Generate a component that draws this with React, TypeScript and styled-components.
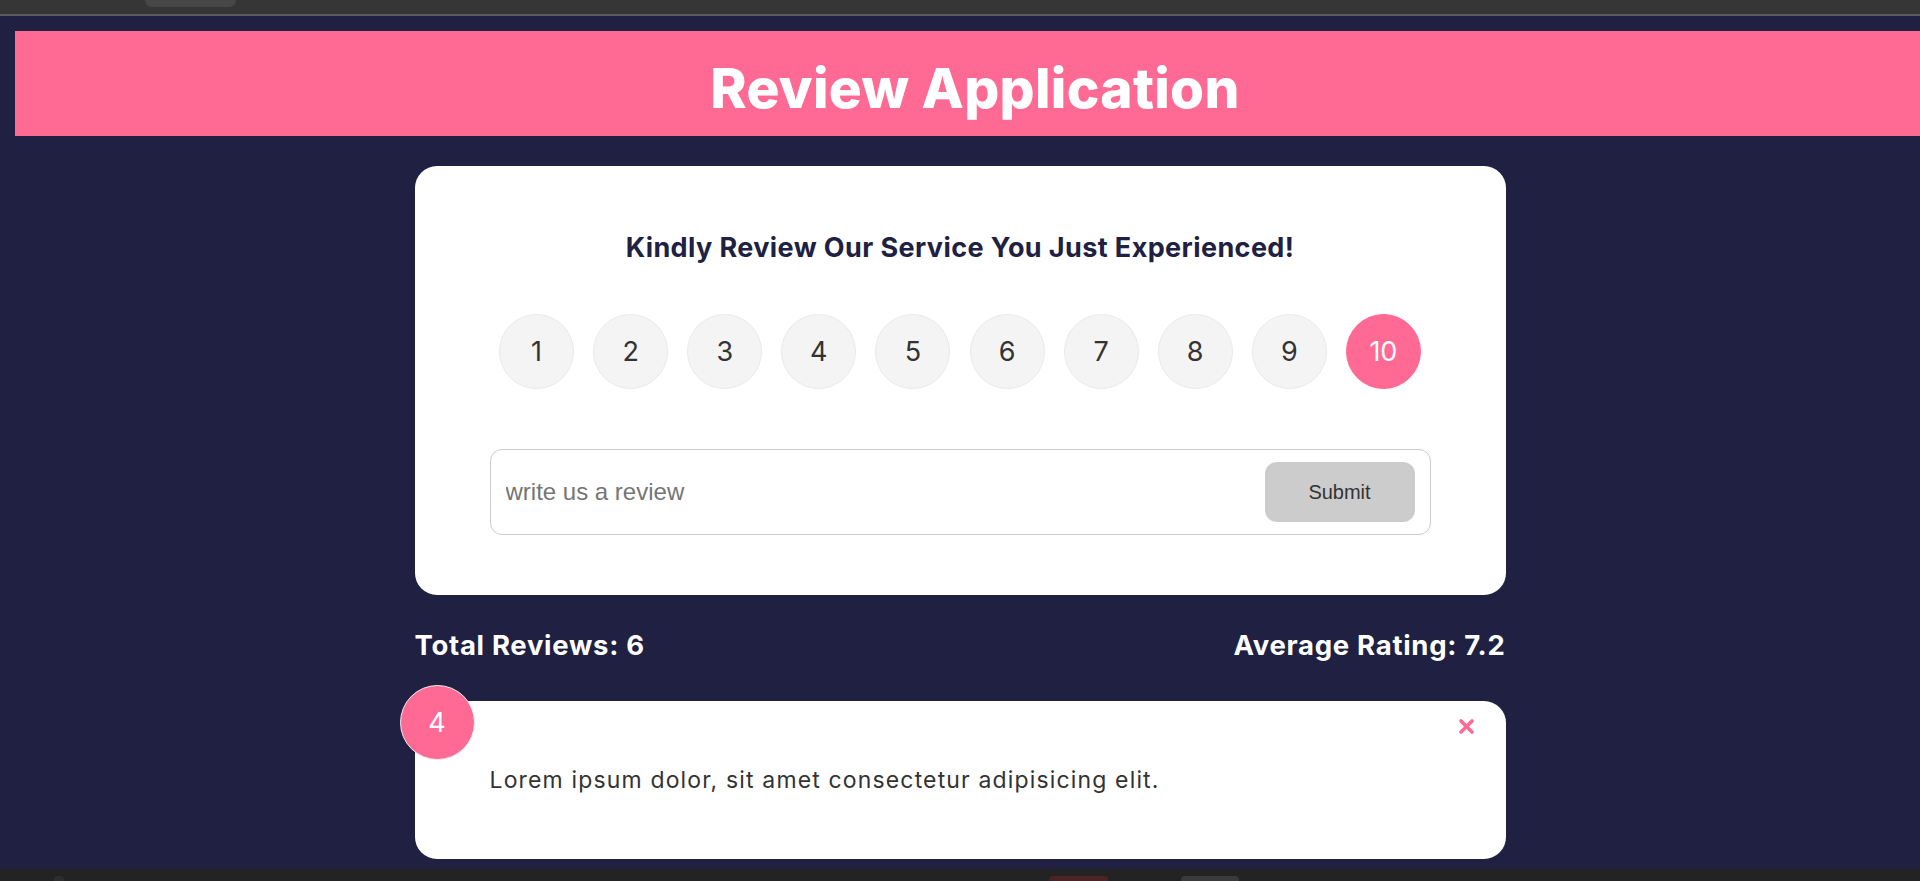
import React, { useState } from "react";
import styled, { createGlobalStyle } from "styled-components";

const PINK = "#ff6a95";
const NAVY = "#202142";
const SANS = `"Inter", "Open Sans", "Noto Sans", sans-serif`;

const GlobalStyle = createGlobalStyle`
  html, body { margin: 0; padding: 0; }
  body {
    background: ${NAVY};
    font-family: ${SANS};
    color: #fff;
    overflow: hidden;
  }
  * { box-sizing: border-box; }
`;

const Frame = styled.div`
  display: flex;
  flex-direction: column;
  height: 881px;
  width: 1920px;
`;

const TopChrome = styled.div`
  height: 16px;
  flex: none;
  background: #363636;
  border-bottom: 2px solid #5c5c5c;
  display: flex;
`;

const ChromeTab = styled.div`
  margin-left: 145px;
  width: 91px;
  height: 7px;
  background: #474747;
  border-radius: 0 0 10px 10px;
`;

const Viewport = styled.div`
  flex: 1;
  overflow: hidden;
  background: ${NAVY};
`;

const BottomChrome = styled.div`
  height: 12px;
  flex: none;
  background: #232323;
  display: flex;
  align-items: flex-end;
`;

const TaskItem = styled.div<{ $left: number; $w: number; $color: string }>`
  margin-left: ${(p) => p.$left}px;
  width: ${(p) => p.$w}px;
  height: 5px;
  background: ${(p) => p.$color};
  border-radius: 4px 4px 0 0;
`;

const Header = styled.header`
  margin: 15px 0 0 15px;
  height: 105px;
  background: ${PINK};
  display: flex;
  align-items: center;
  justify-content: center;
  padding: 10px 0 0 15px;
`;

const Title = styled.h1`
  margin: 0;
  font-size: 55px;
  font-weight: 800;
  color: #fff;
  line-height: 1;
  letter-spacing: 0.3px;
`;

const Container = styled.main`
  width: 1091px;
  margin: 30px auto 0;
  display: flex;
  flex-direction: column;
`;

const Card = styled.div`
  position: relative;
  background: #fff;
  color: #333;
  border-radius: 22px;
  padding: 60px 75px;
`;

const CardTitle = styled.h2`
  margin: 0;
  text-align: center;
  font-size: 27px;
  line-height: 43px;
  font-weight: 700;
  color: ${NAVY};
  letter-spacing: 0.4px;
`;

const RatingList = styled.ul`
  list-style: none;
  margin: 45px 0 60px;
  padding: 0;
  display: flex;
  align-items: center;
  justify-content: space-around;
`;

const RatingItem = styled.li<{ $selected: boolean }>`
  width: 75px;
  height: 75px;
  border-radius: 50%;
  display: flex;
  align-items: center;
  justify-content: center;
  font-size: 27px;
  font-weight: 400;
  color: ${(p) => (p.$selected ? "#fff" : "#333")};
  background: ${(p) => (p.$selected ? PINK : "#f4f4f4")};
  border: 1.5px solid ${(p) => (p.$selected ? PINK : "#eaeaea")};
  cursor: pointer;
`;

const InputGroup = styled.div`
  display: flex;
  align-items: center;
  border: 1px solid #ccc;
  border-radius: 12px;
  padding: 12px 15px;
`;

const TextInput = styled.input`
  flex: 1;
  border: none;
  outline: none;
  font-family: "Liberation Sans", Arial, sans-serif;
  font-size: 24px;
  color: #333;
  padding: 0;
  &::placeholder { color: #757575; }
`;

const SubmitButton = styled.button`
  width: 150px;
  height: 60px;
  border: 0;
  border-radius: 12px;
  background: #cccccc;
  color: #333;
  font-family: "Liberation Sans", Arial, sans-serif;
  font-size: 20px;
`;

const Stats = styled.div`
  margin-top: 30px;
  display: flex;
  justify-content: space-between;
  align-items: center;
`;

const StatText = styled.h4`
  margin: 0;
  font-size: 27.5px;
  line-height: 40px;
  font-weight: 700;
  color: #fff;
  letter-spacing: 0.7px;
`;

const FeedbackList = styled.div`
  margin-top: 36px;
  display: flex;
  flex-direction: column;
  gap: 30px;
`;

const NumBadge = styled.div`
  position: absolute;
  top: -16px;
  left: -15px;
  width: 75px;
  height: 75px;
  border-radius: 50%;
  background: ${PINK};
  border: 1.5px solid #eee;
  display: flex;
  align-items: center;
  justify-content: center;
  color: #fff;
  font-size: 27px;
`;

const CloseButton = styled.button`
  position: absolute;
  top: 17px;
  right: 31px;
  background: none;
  border: none;
  padding: 0;
  display: flex;
  cursor: pointer;
`;

const ReviewText = styled.p`
  margin: 0;
  font-size: 23px;
  line-height: 38.4px;
  color: #333;
  letter-spacing: 1.15px;
`;

const CloseIcon = () => (
  <svg width="17" height="17" viewBox="0 0 17 17">
    <path d="M3 3 L14 14 M14 3 L3 14" stroke={PINK} strokeWidth="3.6" strokeLinecap="round" />
  </svg>
);

export default function App() {
  const [selected, setSelected] = useState(10);
  const reviews = [{ id: 1, rating: 4, text: "Lorem ipsum dolor, sit amet consectetur adipisicing elit." }];
  return (
    <>
      <GlobalStyle />
      <Frame>
        <TopChrome>
          <ChromeTab />
        </TopChrome>
        <Viewport>
          <Header>
            <Title>Review Application</Title>
          </Header>
          <Container>
            <Card>
              <CardTitle>Kindly Review Our Service You Just Experienced!</CardTitle>
              <RatingList>
                {Array.from({ length: 10 }, (_, i) => i + 1).map((n) => (
                  <RatingItem key={n} $selected={n === selected} onClick={() => setSelected(n)}>
                    {n}
                  </RatingItem>
                ))}
              </RatingList>
              <InputGroup>
                <TextInput placeholder="write us a review" />
                <SubmitButton disabled>Submit</SubmitButton>
              </InputGroup>
            </Card>
            <Stats>
              <StatText>Total Reviews: 6</StatText>
              <StatText>Average Rating: 7.2</StatText>
            </Stats>
            <FeedbackList>
              {reviews.map((r) => (
                <Card key={r.id}>
                  <NumBadge>{r.rating}</NumBadge>
                  <CloseButton aria-label="delete">
                    <CloseIcon />
                  </CloseButton>
                  <ReviewText>{r.text}</ReviewText>
                </Card>
              ))}
            </FeedbackList>
          </Container>
        </Viewport>
        <BottomChrome>
          <TaskItem $left={54} $w={10} $color="#2e2e2e" />
          <TaskItem $left={985} $w={59} $color="#4b2323" />
          <TaskItem $left={73} $w={58} $color="#3a3a3a" />
        </BottomChrome>
      </Frame>
    </>
  );
}
